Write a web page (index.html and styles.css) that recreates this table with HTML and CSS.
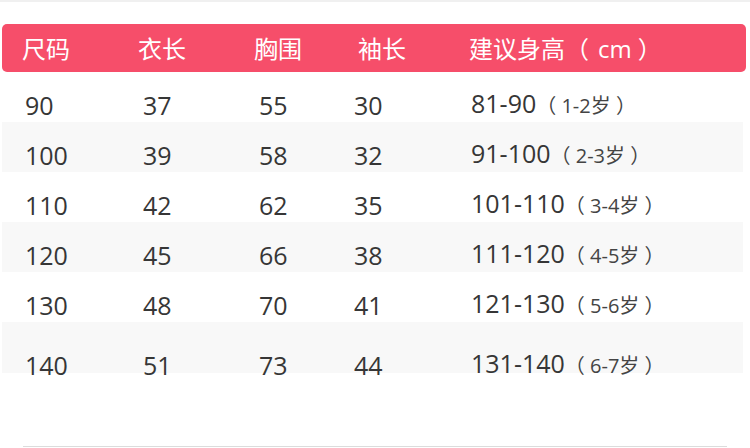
FILE: index.html
```html
<!DOCTYPE html>
<html lang="zh">
<head>
<meta charset="utf-8">
<link rel="stylesheet" href="styles.css">
</head>
<body>
<div class="topline"></div>
<div class="sheet">
  <div class="head">
    <span>尺码</span><span>衣长</span><span>胸围</span><span>袖长</span><span>建议身高（<span class="cm">cm</span>）</span>
  </div>
  <div class="row"><span>90</span><span>37</span><span>55</span><span>30</span><span>81-90<small>（ 1-2岁 ）</small></span></div>
  <div class="row alt"><span>100</span><span>39</span><span>58</span><span>32</span><span>91-100<small>（ 2-3岁 ）</small></span></div>
  <div class="row"><span>110</span><span>42</span><span>62</span><span>35</span><span>101-110<small>（ 3-4岁 ）</small></span></div>
  <div class="row alt"><span>120</span><span>45</span><span>66</span><span>38</span><span>111-120<small>（ 4-5岁 ）</small></span></div>
  <div class="row"><span>130</span><span>48</span><span>70</span><span>41</span><span>121-130<small>（ 5-6岁 ）</small></span></div>
  <div class="row alt last"><span>140</span><span>51</span><span>73</span><span>44</span><span>131-140<small>（ 6-7岁 ）</small></span></div>
</div>
<div class="bottomline"></div>
</body>
</html>
```
FILE: styles.css
```css
html, body {
  margin: 0;
  padding: 0;
  background: #fff;
  width: 750px;
  height: 448px;
  overflow: hidden;
}
body {
  font-family: "Open Sans", "Noto Sans CJK SC", sans-serif;
  color: #363636;
}
.topline {
  height: 2px;
  background: #f0f0f0;
}
.sheet {
  padding: 22px 7px 0 2px;
}
.head {
  display: grid;
  grid-template-columns: 116px 116px 104px 111px 1fr;
  align-items: center;
  height: 48px;
  margin-right: -3px;
  padding-left: 20px;
  background: #f64e6a;
  border-radius: 5px;
  color: #fff;
  font-family: "Noto Sans CJK SC", sans-serif;
  font-size: 24px;
  line-height: 24px;
}
.head .cm {
  font-family: "Open Sans", sans-serif;
  margin: 0 6px 0 9px;
}
.row {
  display: grid;
  grid-template-columns: 118px 116px 95px 117px 1fr;
  align-items: center;
  box-sizing: border-box;
  height: 50px;
  padding: 15px 0 0 23px;
  font-size: 25px;
  line-height: 24px;
}
.row.alt { background: #f8f8f8; }
.row.last { height: 51px; padding-top: 29px; }
.row span { white-space: nowrap; }
.row small {
  font-family: "Open Sans", "Noto Sans CJK SC", sans-serif;
  font-size: 20px;
  color: #444;
}
.bottomline {
  height: 1px;
  margin: 73px 23px 0 23px;
  background: #dcdcdc;
}
```
